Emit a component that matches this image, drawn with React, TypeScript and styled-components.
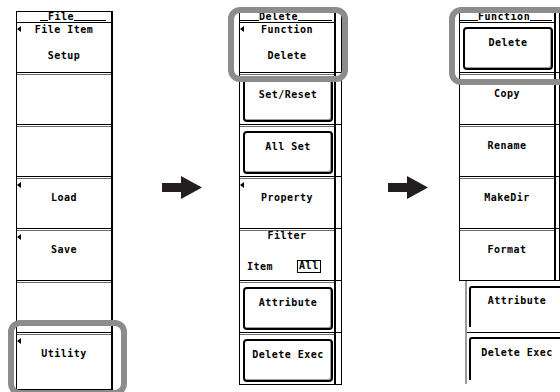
import React from 'react'
import styled, { createGlobalStyle } from 'styled-components'

const GlobalStyle = createGlobalStyle`
  html, body {
    margin: 0;
    padding: 0;
    background: #fff;
  }
`

const Stage = styled.div`
  position: relative;
  width: 560px;
  height: 392px;
  overflow: hidden;
  box-sizing: border-box;
  display: flex;
  align-items: flex-start;
  padding: 11px 0 0 16px;
  background: #fff;
  color: #000;
  font-family: 'DejaVu Sans Mono', 'Liberation Mono', monospace;
  font-weight: bold;
  font-size: 10px;
  letter-spacing: 0.5px;
`

const Menu = styled.div<{ $gap: number }>`
  display: flex;
  flex-shrink: 0;
  margin-left: ${p => p.$gap}px;
`

const Stack = styled.div`
  display: flex;
  flex-direction: column;
`

const Column = styled.div`
  width: 97px;
  box-sizing: border-box;
  display: flex;
  flex-direction: column;
  border-left: 1px solid #000;
  border-right: 2px solid #000;
`

const Gutter = styled.div<{ $w: number }>`
  width: ${p => p.$w}px;
  box-sizing: border-box;
  display: flex;
  flex-direction: column;
  border-right: 1px solid #000;
`

const Tick = styled.div<{ $h: number }>`
  height: ${p => p.$h}px;
  box-sizing: border-box;
  border-bottom: 1px solid #000;
`

const Title = styled.div<{ $offset: number }>`
  height: 12px;
  box-sizing: border-box;
  border-top: 1px solid #000;
  border-bottom: 1px solid #000;
  display: flex;
  align-items: flex-start;
  padding-left: ${p => p.$offset}px;
  line-height: 10px;
  white-space: pre;
`

const Rule = styled.span<{ $w: number }>`
  width: ${p => p.$w}px;
  height: 9px;
  box-sizing: border-box;
  border-bottom: 1px solid #000;
  flex-shrink: 0;
`

const Slot = styled.div<{ $first?: boolean; $h?: number }>`
  position: relative;
  box-sizing: border-box;
  height: ${p => p.$h ?? (p.$first ? 50 : 51)}px;
  margin-top: ${p => (p.$first ? 0 : 1)}px;
  border-top: ${p => (p.$first ? 'none' : '1px solid #6e6e6e')};
  border-bottom: 1px solid #000;
  display: flex;
  flex-direction: column;
`

const Marker = styled.span`
  position: absolute;
  top: 3px;
  left: 0;
  width: 0;
  height: 0;
  border-top: 3.5px solid transparent;
  border-bottom: 3.5px solid transparent;
  border-right: 4px solid #000;
`

const Label = styled.div<{ $top: number; $align?: string }>`
  margin-top: ${p => p.$top}px;
  height: 10px;
  line-height: 10px;
  text-align: ${p => p.$align ?? 'center'};
  white-space: pre;
`

const Raised = styled.div`
  flex: 1;
  margin: 4px 1px 2px 3px;
  border: 2px solid #000;
  border-radius: 4px;
  box-shadow: inset -1px -1px 0 #a0a0a0;
`

const FilterRow = styled.div`
  display: flex;
  align-items: center;
  margin-top: 19px;
  padding-left: 7px;
  line-height: 10px;
  white-space: pre;
`

const Choice = styled.span`
  margin-left: 24px;
  padding: 0 1px 1px 1px;
  border: 1px solid #000;
  line-height: 10px;
`

const Drawer = styled.div`
  width: 96px;
  margin-left: 6px;
  border-left: 2px solid #9a9a9a;
  display: flex;
  flex-direction: column;
`

const DrawerSlot = styled.div<{ $first?: boolean }>`
  height: ${p => (p.$first ? 52 : 51)}px;
  box-sizing: border-box;
  padding: ${p => (p.$first ? '5px 0 5px 2px' : '4px 0 4px 2px')};
  border-bottom: ${p => (p.$first ? '1px solid #000' : 'none')};
  display: flex;
`

const DrawerBox = styled.div`
  flex: 1;
  border-top: 2px solid #000;
  border-left: 2px solid #000;
  border-top-left-radius: 3px;
`

const ArrowBox = styled.div<{ $gap: number }>`
  margin: 165px 0 0 ${p => p.$gap}px;
  width: 40px;
  height: 23px;
  flex-shrink: 0;
  display: flex;
`

const Ring = styled.div<{ $x: number; $y: number; $w: number; $h: number }>`
  position: absolute;
  left: ${p => p.$x}px;
  top: ${p => p.$y}px;
  width: ${p => p.$w}px;
  height: ${p => p.$h}px;
  box-sizing: border-box;
  border: 6px solid #8c8c8c;
  border-radius: 12px;
  pointer-events: none;
`

const Arrow = ({ gap }: { gap: number }) => (
  <ArrowBox $gap={gap}>
    <svg width='40' height='23' viewBox='0 0 40 23'>
      <polygon
        points='0,7 19,7 19,0 40,11.5 19,23 19,16 0,16'
        fill='#231f20'
      />
    </svg>
  </ArrowBox>
)

type Item =
  | { kind: 'plain'; lines: string[]; marker?: boolean; h?: number }
  | { kind: 'raised'; text: string }
  | { kind: 'filter' }

const renderItem = (item: Item, index: number) => {
  const first = index === 0
  if (item.kind === 'raised') {
    return (
      <Slot key={index} $first={first}>
        <Raised>
          <Label $top={9}>{item.text}</Label>
        </Raised>
      </Slot>
    )
  }
  if (item.kind === 'filter') {
    return (
      <Slot key={index} $first={first}>
        <Label $top={0}>Filter</Label>
        <FilterRow>
          Item<Choice>All</Choice>
        </FilterRow>
      </Slot>
    )
  }
  return (
    <Slot key={index} $first={first} $h={item.h}>
      {item.marker && <Marker />}
      {item.lines.length === 2 ? (
        <>
          <Label $top={2}>{item.lines[0]}</Label>
          <Label $top={16}>{item.lines[1]}</Label>
        </>
      ) : (
        <Label $top={item.lines.length ? 14 : 0}>{item.lines[0] ?? ''}</Label>
      )}
    </Slot>
  )
}

const fileMenu: Item[] = [
  { kind: 'plain', lines: ['File Item', 'Setup'], marker: true },
  { kind: 'plain', lines: [] },
  { kind: 'plain', lines: [] },
  { kind: 'plain', lines: ['Load'], marker: true },
  { kind: 'plain', lines: ['Save'], marker: true },
  { kind: 'plain', lines: [] },
  { kind: 'plain', lines: ['Utility'], marker: true, h: 56 },
]

const deleteMenu: Item[] = [
  { kind: 'plain', lines: ['Function', 'Delete'], marker: true },
  { kind: 'raised', text: 'Set/Reset' },
  { kind: 'raised', text: 'All Set' },
  { kind: 'plain', lines: ['Property'], marker: true },
  { kind: 'filter' },
  { kind: 'raised', text: 'Attribute' },
  { kind: 'raised', text: 'Delete Exec' },
]

const functionMenu: Item[] = [
  { kind: 'raised', text: 'Delete' },
  { kind: 'plain', lines: ['Copy'] },
  { kind: 'plain', lines: ['Rename'] },
  { kind: 'plain', lines: ['MakeDir'] },
  { kind: 'plain', lines: ['Format'] },
]

const ticks = (count: number) => [62, ...Array(count - 1).fill(52)]

export default function App() {
  return (
    <>
      <GlobalStyle />
      <Stage>
        <Menu $gap={0}>
          <Column>
            <Title $offset={23}>
              <Rule $w={8} />
              File
              <Rule $w={32} />
            </Title>
            {fileMenu.map(renderItem)}
          </Column>
        </Menu>

        <Arrow gap={49} />

        <Menu $gap={37}>
          <Column>
            <Title $offset={0}>
              <Rule $w={19} />
              Delete
              <Rule $w={34} />
            </Title>
            {deleteMenu.map(renderItem)}
          </Column>
          <Gutter $w={6}>
            {ticks(7).map((h, i) => (
              <Tick key={i} $h={h} />
            ))}
          </Gutter>
        </Menu>

        <Arrow gap={46} />

        <Menu $gap={31}>
          <Stack>
            <Menu $gap={0}>
              <Column>
                <Title $offset={0}>
                  <Rule $w={18} />
                  Function
                  <Rule $w={22} />
                </Title>
                {functionMenu.map(renderItem)}
              </Column>
              <Gutter $w={4}>
                {ticks(5).map((h, i) => (
                  <Tick key={i} $h={h} />
                ))}
              </Gutter>
            </Menu>
            <Drawer>
              <DrawerSlot $first>
                <DrawerBox>
                  <Label $top={8}>Attribute</Label>
                </DrawerBox>
              </DrawerSlot>
              <DrawerSlot>
                <DrawerBox>
                  <Label $top={9}>Delete Exec</Label>
                </DrawerBox>
              </DrawerSlot>
            </Drawer>
          </Stack>
        </Menu>

        <Ring $x={8} $y={320} $w={119} $h={76} />
        <Ring $x={228} $y={7} $w={120} $h={75} />
        <Ring $x={449} $y={7} $w={125} $h={78} />
      </Stage>
    </>
  )
}
